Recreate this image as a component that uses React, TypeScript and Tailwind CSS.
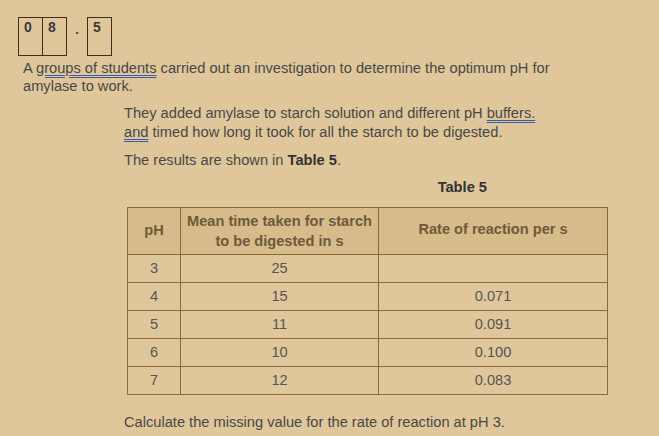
const ROWS = [
  { ph: '3', time: '25', rate: '' },
  { ph: '4', time: '15', rate: '0.071' },
  { ph: '5', time: '11', rate: '0.091' },
  { ph: '6', time: '10', rate: '0.100' },
  { ph: '7', time: '12', rate: '0.083' },
]

const squiggle = 'underline decoration-double decoration-[#3a5ba8] underline-offset-2'

function DigitBox({ d }: { d: string }) {
  return (
    <div className="h-[39px] w-[25px] border border-[#3d2e1a] pl-[5px] pt-[1px] text-[14px] font-bold leading-[17px] text-[#3a3a3a]">
      {d}
    </div>
  )
}

export default function App() {
  return (
    <div className="h-[436px] w-[659px] overflow-hidden bg-[#e0c79b] font-['Liberation_Sans',Arial,sans-serif] text-[#474747]">
      <div className="flex items-start pl-[18px] pt-[17px]">
        <DigitBox d="0" />
        <div className="-ml-px">
          <DigitBox d="8" />
        </div>
        <div className="w-[20px] pt-[5px] text-center text-[13px] font-bold leading-[16px] text-[#3a3a3a]">.</div>
        <DigitBox d="5" />
      </div>

      <p className="pl-[23px] pt-[3px] text-[14.65px] leading-[18px]">
        A <span className={squiggle}>groups of students</span> carried out an investigation to determine the optimum pH for
        <br />
        amylase to work.
      </p>

      <div className="pl-[124px] pt-[9px]">
        <p className="text-[14.65px] leading-[19px]">
          They added amylase to starch solution and different pH <span className={squiggle}>buffers.</span>
          <br />
          <span className={squiggle}>and</span> timed how long it took for all the starch to be digested.
        </p>
        <p className="pt-[9px] text-[14.65px] leading-[19px]">
          The results are shown in <b className="text-[#333]">Table 5</b>.
        </p>
        <p className="w-[483px] pt-[8px] text-right pr-[120px] text-[14.65px] font-bold leading-[19px] text-[#333]">Table 5</p>

        <table className="ml-[3px] mt-[10px] w-[481px] border-collapse text-[14.6px]">
          <thead>
            <tr className="bg-[#d7bb8b] text-[#6e5a38]">
              <th className="h-[47px] w-[53px] border border-[#8a6a3d] font-bold">pH</th>
              <th className="w-[198px] border border-[#8a6a3d] font-bold leading-[20px]">
                Mean time taken for starch
                <br />
                to be digested in s
              </th>
              <th className="border border-[#8a6a3d] pb-[2px] font-bold">Rate of reaction per s</th>
            </tr>
          </thead>
          <tbody>
            {ROWS.map((r) => (
              <tr key={r.ph} className="text-[#555]">
                <td className="h-[28px] border border-[#8a6a3d] text-center">{r.ph}</td>
                <td className="border border-[#8a6a3d] text-center">{r.time}</td>
                <td className="border border-[#8a6a3d] text-center">{r.rate}</td>
              </tr>
            ))}
          </tbody>
        </table>

        <p className="pt-[18px] text-[14.65px] leading-[19px]">Calculate the missing value for the rate of reaction at pH 3.</p>
      </div>
    </div>
  )
}
